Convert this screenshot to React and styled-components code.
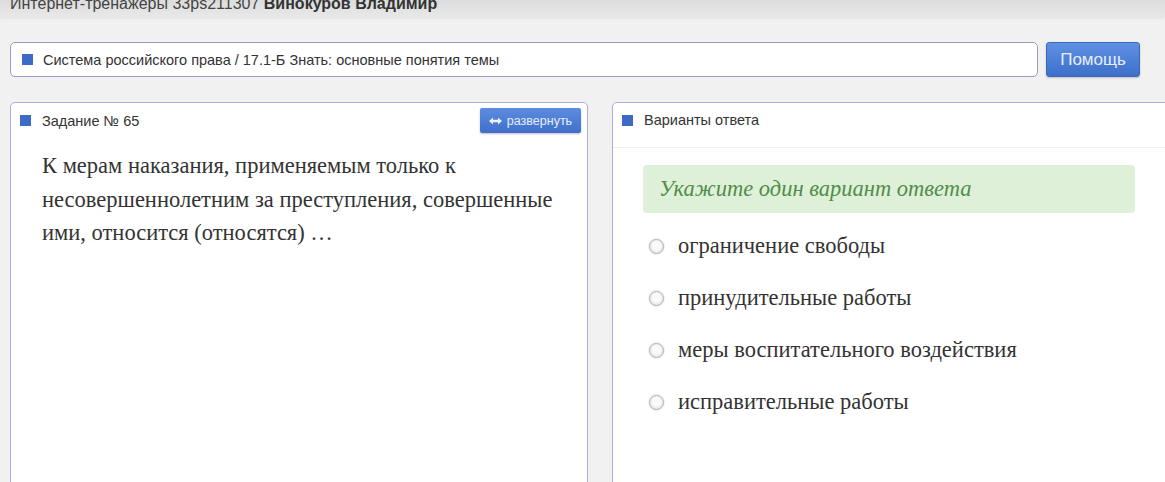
import * as React from "react";
import styled, { createGlobalStyle } from "styled-components";

const GlobalStyle = createGlobalStyle`
  html, body {
    margin: 0;
    padding: 0;
    background: #f1f1f1;
    overflow: hidden;
    font-family: "Liberation Sans", Arial, sans-serif;
    color: #333;
  }
`;

const options = [
  "ограничение свободы",
  "принудительные работы",
  "меры воспитательного воздействия",
  "исправительные работы",
];

const ResizeIcon = () => (
  <svg width="13" height="8" viewBox="0 0 13 8">
    <path d="M0 4 L4 0.5 V2.8 H9 V0.5 L13 4 L9 7.5 V5.2 H4 V7.5 Z" fill="#eef3fd" />
  </svg>
);

function App() {
  return (
    <Page>
      <GlobalStyle />
      <TopBar>
        <TopText>
          Интернет-тренажеры 33ps211307 <b>Винокуров Владимир</b>
        </TopText>
      </TopBar>

      <CrumbRow>
        <Crumb>
          <Square />
          Система российского права / 17.1-Б Знать: основные понятия темы
        </Crumb>
        <HelpButton>Помощь</HelpButton>
      </CrumbRow>

      <Columns>
        <Panel>
          <PanelHead>
            <Square />
            <HeadTitle>Задание № 65</HeadTitle>
            <ExpandButton>
              <ResizeIcon /> развернуть
            </ExpandButton>
          </PanelHead>
          <Question>
            К мерам наказания, применяемым только к несовершеннолетним за
            преступления, совершенные ими, относится (относятся) …
          </Question>
        </Panel>

        <Panel>
          <PanelHead bordered>
            <Square />
            <HeadTitle>Варианты ответа</HeadTitle>
          </PanelHead>
          <Answers>
            <Hint>Укажите один вариант ответа</Hint>
            {options.map((o) => (
              <Option key={o}>
                <Radio />
                {o}
              </Option>
            ))}
          </Answers>
        </Panel>
      </Columns>
    </Page>
  );
}

const Page = styled.div`
  width: 1165px;
  height: 482px;
  overflow: hidden;
`;

const TopBar = styled.div`
  height: 17px;
  background: linear-gradient(#dcdcdc, #e8e8e8);
  box-shadow: 0 1px 3px rgba(0, 0, 0, 0.08);
  padding-left: 10px;
  overflow: hidden;
`;

const TopText = styled.div`
  font-size: 16px;
  line-height: 17px;
  margin-top: -5px;
  color: #444;
  white-space: nowrap;
  b {
    color: #333;
  }
`;

const CrumbRow = styled.div`
  display: flex;
  gap: 8px;
  padding: 25px 25px 0 10px;
  height: 35px;
`;

const Crumb = styled.div`
  flex: 1;
  display: flex;
  align-items: center;
  gap: 10px;
  padding-left: 11px;
  background: #fff;
  border: 1px solid #9c9cc2;
  border-radius: 5px;
  font-size: 14.5px;
  color: #333;
`;

const Square = styled.span`
  width: 11px;
  height: 11px;
  background: #3d69c7;
  flex: none;
`;

const HelpButton = styled.button`
  width: 94px;
  border: 1px solid #3d68b8;
  border-radius: 3px;
  background: linear-gradient(#5f91e2, #3e6fcb);
  color: #e8eefc;
  font-family: "Liberation Sans", Arial, sans-serif;
  font-size: 17px;
  box-shadow: 0 1px 2px rgba(0, 0, 0, 0.2);
`;

const Columns = styled.div`
  display: grid;
  grid-template-columns: 578px 578px;
  gap: 24px;
  padding: 25px 0 0 10px;
`;

const Panel = styled.div`
  height: 420px;
  background: #fff;
  border: 1px solid #a9afd8;
  border-radius: 5px 5px 0 0;
`;

const PanelHead = styled.div`
  display: flex;
  align-items: center;
  gap: 11px;
  height: 35px;
  padding: 0 6px 0 9px;
  box-sizing: border-box;
  ${(p) =>
    p.bordered &&
    `
    height: 45px;
    padding-bottom: 10px;
    margin-bottom: 9px;
    border-bottom: 1px solid #f0f0f4;
  `}
`;

const HeadTitle = styled.div`
  flex: 1;
  font-size: 14.5px;
  color: #333;
`;

const ExpandButton = styled.div`
  width: 101px;
  height: 25px;
  box-sizing: border-box;
  display: flex;
  align-items: center;
  justify-content: center;
  gap: 5px;
  background: linear-gradient(#5c8de0, #3f6fcb);
  border-radius: 2px;
  box-shadow: 0 1px 2px rgba(0, 0, 0, 0.25);
  color: #e6edfb;
  font-size: 12.5px;
`;

const Question = styled.div`
  padding: 11px 20px 0 31px;
  font-family: "Liberation Serif", "Times New Roman", serif;
  font-size: 22.5px;
  line-height: 33.5px;
  color: #333;
`;

const Answers = styled.div`
  padding: 8px 0 0 30px;
  width: 492px;
`;

const Hint = styled.div`
  height: 48px;
  box-sizing: border-box;
  display: flex;
  align-items: center;
  padding-left: 16px;
  background: #dff0d8;
  border-radius: 4px;
  font-family: "Liberation Serif", "Times New Roman", serif;
  font-style: italic;
  font-size: 22.5px;
  color: #4f8d4a;
  margin-bottom: 19px;
`;

const Option = styled.div`
  display: flex;
  align-items: center;
  gap: 14px;
  height: 52px;
  padding-left: 6px;
  margin-top: -12px;
  margin-bottom: 12px;
  font-family: "Liberation Serif", "Times New Roman", serif;
  font-size: 22.5px;
  color: #333;
`;

const Radio = styled.span`
  width: 15px;
  height: 15px;
  border-radius: 50%;
  box-sizing: border-box;
  border: 1px solid #b3b3b3;
  background: radial-gradient(circle at 50% 45%, #fafafa 40%, #d6d6d6 100%);
  box-shadow: 0 0 2px rgba(0, 0, 0, 0.22);
  flex: none;
`;

export default App;
